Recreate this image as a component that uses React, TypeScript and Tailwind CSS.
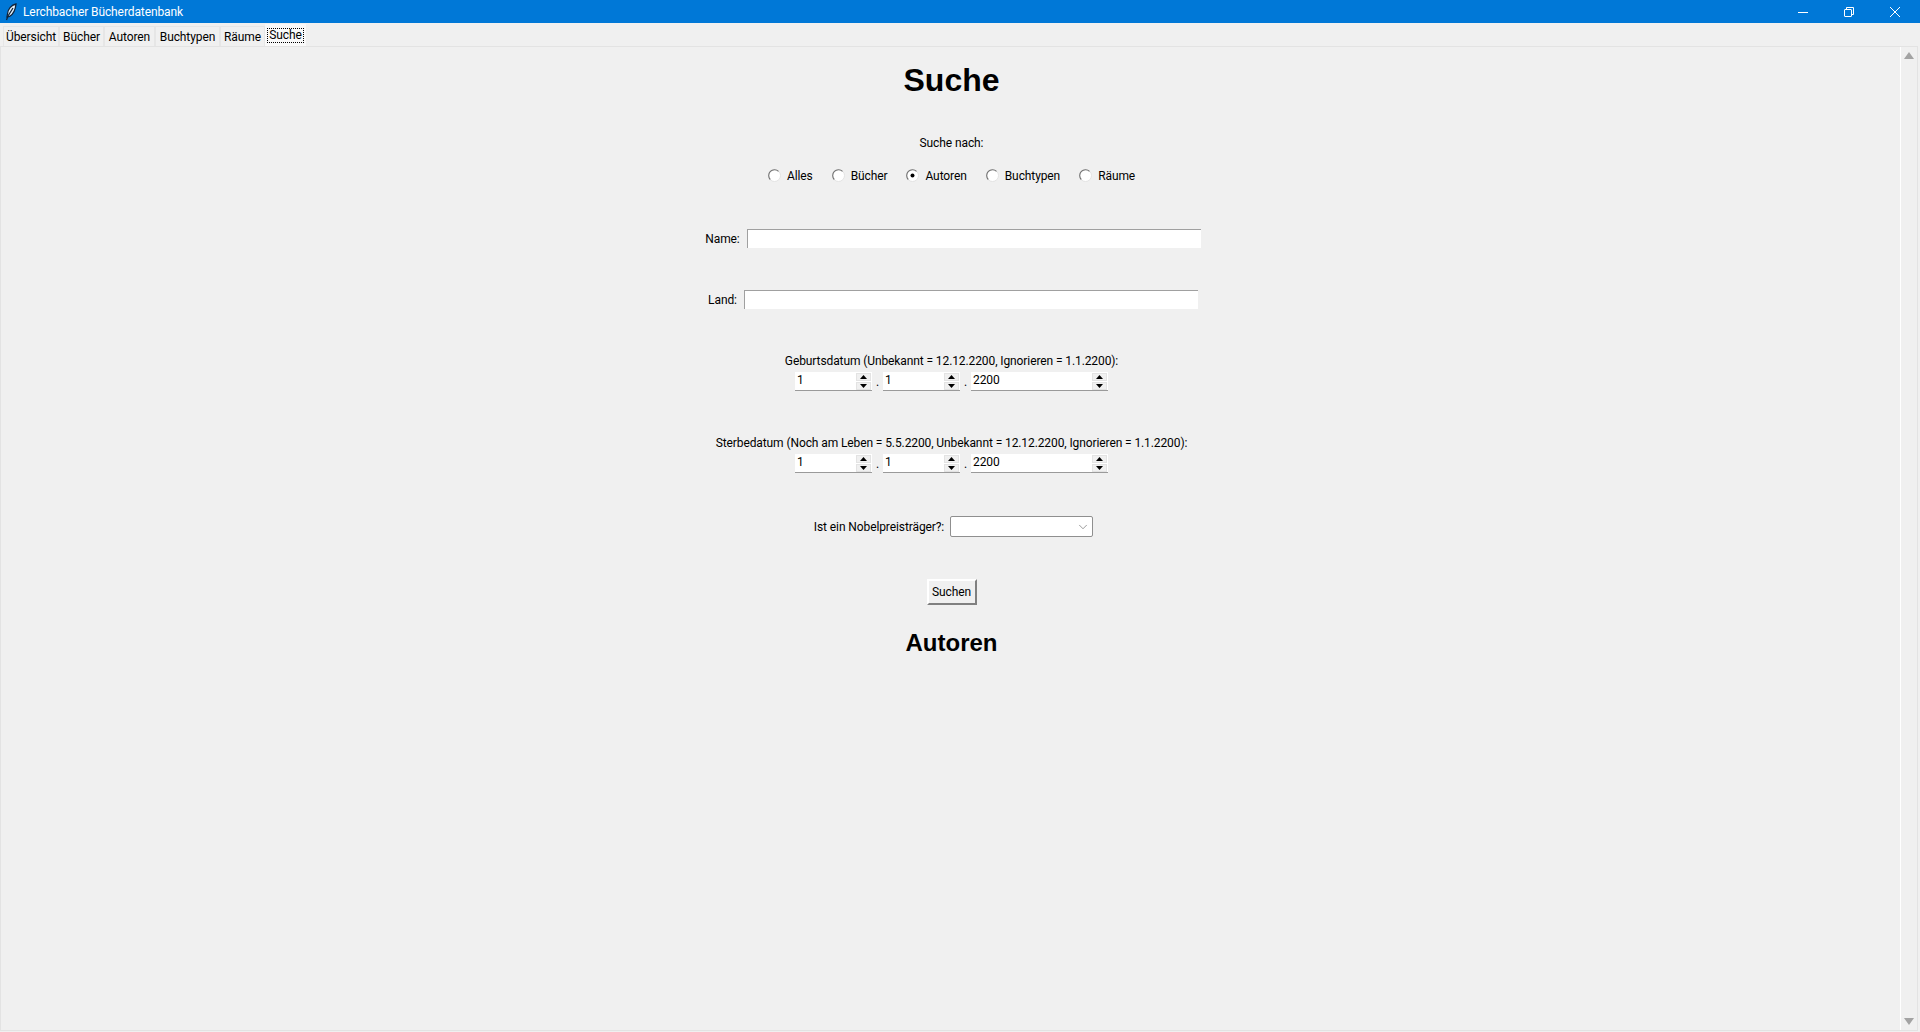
import { ChevronDown } from "lucide-react";

const tabs = [
  { name: "Übersicht", width: "w-[56px]" },
  { name: "Bücher", width: "w-[45px]" },
  { name: "Autoren", width: "w-[51px]" },
  { name: "Buchtypen", width: "w-[65px]" },
  { name: "Räume", width: "w-[45px]" },
];
const radios = ["Alles", "Bücher", "Autoren", "Buchtypen", "Räume"];
const uiFont = "font-['Roboto',sans-serif]";

function Feather() {
  return (
    <svg width="12" height="18" viewBox="0 0 12 18" className="ml-[5px]">
      <path d="M11 1C6.5 2 3 6 2.5 11L2 14L4.5 13.5C8 11.5 10.5 6.5 11 1Z" fill="#dff0fb" stroke="#10233a" strokeWidth="1.3" />
      <path d="M8 5L3 13L1.5 17" fill="none" stroke="#10233a" strokeWidth="1.3" />
    </svg>
  );
}

function MinimizeIcon() {
  return (
    <svg width="10" height="10" viewBox="0 0 10 10" stroke="white" strokeWidth="1">
      <path d="M0 5.5H10" />
    </svg>
  );
}

function RestoreIcon() {
  return (
    <svg width="10" height="10" viewBox="0 0 10 10" fill="none" stroke="white" strokeWidth="1">
      <rect x="0.5" y="2.5" width="7" height="7" rx="0.5" />
      <path d="M2.5 2.5V0.5H9.5V7.5H7.5" />
    </svg>
  );
}

function CloseIcon() {
  return (
    <svg width="10" height="10" viewBox="0 0 10 10" stroke="white" strokeWidth="1">
      <path d="M0 0L10 10M10 0L0 10" />
    </svg>
  );
}

function Radio({ on }: { on?: boolean }) {
  return (
    <svg width="13" height="13" viewBox="0 0 13 13" className="shrink-0 -mt-[1px]">
      <circle cx="6.5" cy="6.5" r="6" fill="#ffffff" stroke="#e3e3e3" />
      <path d="M10.5 2.3A5.8 5.8 0 0 0 2.3 10.5" fill="none" stroke="#707070" strokeWidth="1.1" />
      {on && <circle cx="6.5" cy="6.5" r="2" fill="#000000" />}
    </svg>
  );
}

function SpinArrow({ down }: { down?: boolean }) {
  return (
    <div className="w-[15px] h-[8px] bg-[#f0f0f0] border border-[#e3e3e3] flex items-center justify-center">
      <svg width="7" height="4" viewBox="0 0 7 4">
        <path d={down ? "M0 0H7L3.5 4Z" : "M0 4H7L3.5 0Z"} fill="#000000" />
      </svg>
    </div>
  );
}

function Spinbox({ value, width }: { value: string; width: string }) {
  return (
    <div className={`${width} h-[19px] bg-white border-b border-[#9a9a9a] flex items-start justify-between pl-[2px] pr-[1px]`}>
      <span className="leading-[16px]">{value}</span>
      <div className="flex flex-col gap-[1px] pt-[1px]">
        <SpinArrow />
        <SpinArrow down />
      </div>
    </div>
  );
}

function DateRow() {
  return (
    <div className="flex items-start mt-[3px]">
      <Spinbox value="1" width="w-[77px]" />
      <span className="w-[11px] text-center leading-[20px]">.</span>
      <Spinbox value="1" width="w-[77px]" />
      <span className="w-[11px] text-center leading-[20px]">.</span>
      <Spinbox value="2200" width="w-[137px]" />
    </div>
  );
}

function TextRow({ label, mt }: { label: string; mt: string }) {
  return (
    <div className={`flex items-center gap-[7px] h-[19px] ml-[3px] ${mt}`}>
      <span>{label}</span>
      <div className="w-[454px] h-[19px] bg-white border-t border-l border-[#a0a0a0]" />
    </div>
  );
}

export default function App() {
  return (
    <div className={`w-[1920px] h-[1032px] bg-[#f0f0f0] flex flex-col overflow-hidden text-[12px] tracking-[-0.1px] text-black ${uiFont}`}>
      <div className="h-[23px] bg-[#0078d7] flex items-center text-white shrink-0">
        <Feather />
        <span className="ml-[6px]">Lerchbacher Bücherdatenbank</span>
        <div className="ml-auto flex items-center h-full mr-[2px]">
          <div className="w-[46px] flex justify-center">
            <MinimizeIcon />
          </div>
          <div className="w-[46px] flex justify-center">
            <RestoreIcon />
          </div>
          <div className="w-[46px] flex justify-center">
            <CloseIcon />
          </div>
        </div>
      </div>

      <div className="h-[23px] flex items-end pl-[3px] shrink-0">
        {tabs.map((t) => (
          <div key={t.name} className={`${t.width} h-[20px] bg-[#f0f0f0] border border-b-0 border-[#e6e6e6] flex items-center justify-center leading-none whitespace-nowrap`}>
            {t.name}
          </div>
        ))}
        <div className="h-[22px] w-[41px] bg-[#f9f9f9] flex items-center justify-center leading-none">
          <span className="outline-1 outline-dotted outline-black px-[1px] pb-[1px]">Suche</span>
        </div>
      </div>

      <div className="flex-1 flex border border-[#e3e3e3] mb-[1px] mr-[2px] min-h-0">
        <div className="flex-1 flex flex-col items-center pl-[2px]">
          <h1 className="mt-[15px] font-['Liberation_Sans',sans-serif] font-bold text-[32px] leading-[37px] tracking-normal">Suche</h1>
          <p className="mt-[36px] leading-[16px]">Suche nach:</p>
          <div className="flex items-center gap-[19px] mt-[17px] h-[16px]">
            {radios.map((r) => (
              <label key={r} className="flex items-center gap-[6px]">
                <Radio on={r === "Autoren"} />
                <span>{r}</span>
              </label>
            ))}
          </div>
          <TextRow label="Name:" mt="mt-[45px]" />
          <TextRow label="Land:" mt="mt-[42px]" />
          <p className="mt-[44px] leading-[16px]">Geburtsdatum (Unbekannt = 12.12.2200, Ignorieren = 1.1.2200):</p>
          <DateRow />
          <p className="mt-[43px] leading-[16px]">Sterbedatum (Noch am Leben = 5.5.2200, Unbekannt = 12.12.2200, Ignorieren = 1.1.2200):</p>
          <DateRow />
          <div className="flex items-center gap-[6px] mt-[42px] ml-[4px]">
            <span>Ist ein Nobelpreisträger?:</span>
            <div className="w-[143px] h-[21px] bg-white border border-[#8f8f8f] rounded-[2px] flex items-center justify-end pr-[2px]">
              <ChevronDown size={14} strokeWidth={1} color="#555555" />
            </div>
          </div>
          <button className="mt-[42px] w-[50px] h-[26px] bg-[#f0f0f0] border-2 border-t-white border-l-white border-r-[#808080] border-b-[#808080] leading-none">
            Suchen
          </button>
          <h2 className="mt-[24px] font-['Liberation_Sans',sans-serif] font-bold text-[24px] leading-[28px] tracking-normal">Autoren</h2>
        </div>

        <div className="w-[17px] border-l border-white flex flex-col items-center justify-between py-[5px] shrink-0">
          <svg width="10" height="7" viewBox="0 0 10 7"><path d="M0 7H10L5 0Z" fill="#a3a3a3" /></svg>
          <svg width="10" height="7" viewBox="0 0 10 7"><path d="M0 0H10L5 7Z" fill="#a3a3a3" /></svg>
        </div>
      </div>
    </div>
  );
}
